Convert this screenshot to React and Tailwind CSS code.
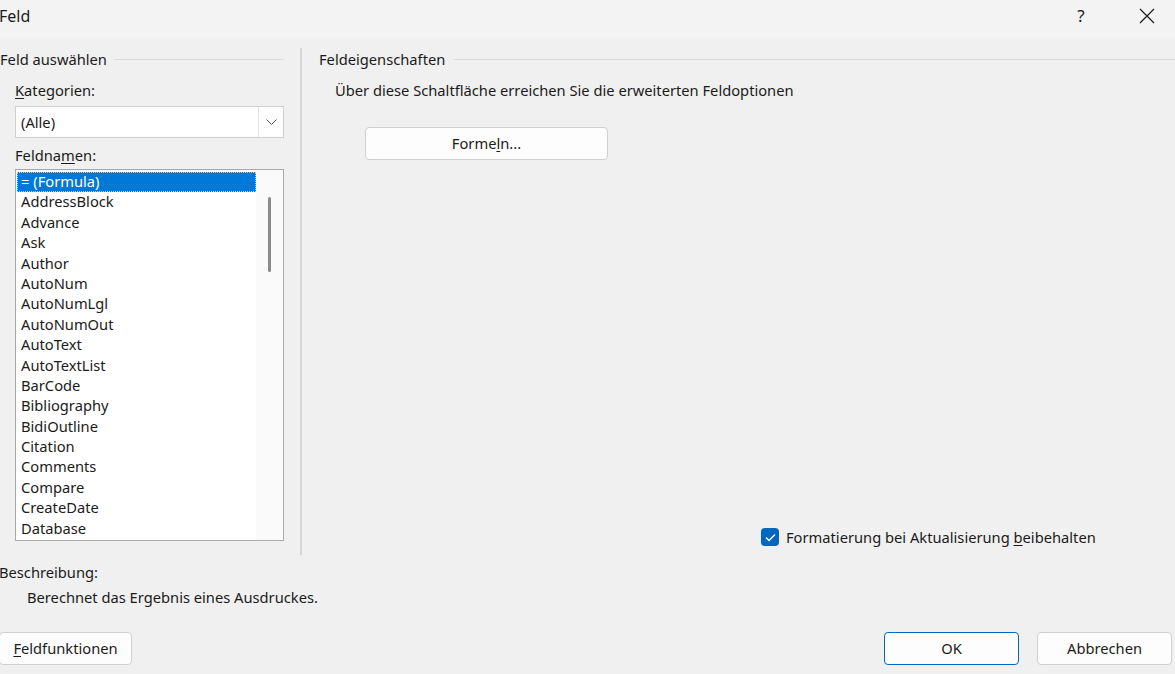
import { useState } from "react";

const FELDER = [
  "= (Formula)", "AddressBlock", "Advance", "Ask", "Author", "AutoNum", "AutoNumLgl",
  "AutoNumOut", "AutoText", "AutoTextList", "BarCode", "Bibliography", "BidiOutline",
  "Citation", "Comments", "Compare", "CreateDate", "Database",
];

const GroupTitle = ({ children }) => (
  <div className="flex items-center h-5">
    <span className="whitespace-nowrap">{children}</span>
    <div className="flex-1 h-px bg-[#dcdcdc] ml-[7px]" />
  </div>
);

const Button = ({ children, primary, className }) => (
  <button
    className={
      "h-[33px] bg-[#fdfdfd] rounded-[4px] border flex items-center justify-center " +
      (primary ? "border-[#0067c0] " : "border-[#d0d0d0] ") +
      (className || "")
    }
  >
    {children}
  </button>
);

export default function App() {
  const [selected, setSelected] = useState(0);
  const [keep, setKeep] = useState(true);

  return (
    <div
      className="w-[1175px] h-[674px] bg-[#f0f0f0] text-[#1b1b1b] text-[14.7px] flex flex-col overflow-hidden"
      style={{ fontFamily: '"Segoe UI", "Noto Sans", sans-serif' }}
    >
      {/* Titelleiste */}
      <div className="h-[38px] shrink-0 bg-[#f3f3f3] flex items-center justify-between pb-[7px]">
        <span className="text-[16px] -ml-[1px]">Feld</span>
        <div className="flex items-center">
          <span className="text-[17px] w-[20px] text-center mr-[48px]">?</span>
          <svg width="16" height="16" viewBox="0 0 16 16" className="mr-[20px]">
            <path d="M1 1 L15 15 M15 1 L1 15" stroke="#1b1b1b" strokeWidth="1.2" fill="none" />
          </svg>
        </div>
      </div>

      {/* Hauptbereich */}
      <div className="h-[517px] shrink-0 flex">
        {/* Feld auswählen */}
        <div className="w-[284px] shrink-0 flex flex-col pt-[11px]">
          <GroupTitle>Feld auswählen</GroupTitle>
          <div className="pl-[15px] mt-[11px] h-5 leading-5">
            <span className="underline underline-offset-2">K</span>ategorien:
          </div>
          <div className="ml-[15px] mt-[6px] h-[32px] bg-white border border-[#cfcfcf] flex">
            <div className="flex-1 flex items-center pl-[5px]">(Alle)</div>
            <div className="w-[25px] border-l border-[#e3e3e3] flex items-center justify-center">
              <svg width="11" height="7" viewBox="0 0 11 7">
                <path d="M0.5 0.5 L5.5 5.5 L10.5 0.5" stroke="#5a5a5a" strokeWidth="1" fill="none" />
              </svg>
            </div>
          </div>
          <div className="pl-[15px] mt-[7px] h-5 leading-5">
            Feldna<span className="underline underline-offset-2">m</span>en:
          </div>
          <div className="ml-[15px] mt-[4px] h-[372px] bg-white border border-[#a9a9a9] flex overflow-hidden">
            <div className="w-[240px] pt-[2px] pl-[1px]">
              {FELDER.map((f, i) => (
                <div
                  key={f}
                  onClick={() => setSelected(i)}
                  className={
                    "h-[20.4px] leading-[19px] pl-[4px] whitespace-nowrap " +
                    (i === selected
                      ? "bg-[#0078d7] text-white outline outline-1 outline-dotted outline-[#f0c090] -outline-offset-1"
                      : "")
                  }
                >
                  {f}
                </div>
              ))}
            </div>
            <div className="flex-1 bg-[#fafafa] flex justify-center pt-[27px]">
              <div className="w-[3px] h-[75px] rounded-full bg-[#8a8a8a]" />
            </div>
          </div>
        </div>

        {/* Trenner */}
        <div className="w-[2px] bg-[#d6d6d6] ml-[16px] mt-[10px]" />

        {/* Feldeigenschaften */}
        <div className="flex-1 flex flex-col pt-[11px] pl-[17px] pb-[8px]">
          <GroupTitle>
            <span className="mr-[2px]">Feldeigenschaften</span>
          </GroupTitle>
          <div className="pl-[16px] mt-[11px] h-5 leading-5">
            Über diese Schaltfläche erreichen Sie die erweiterten Feldoptionen
          </div>
          <div className="pl-[46px] mt-[27px]">
            <Button className="w-[243px] h-[33px]">
              Forme<span className="underline underline-offset-2">l</span>n...
            </Button>
          </div>
          <div className="mt-auto flex items-center pl-[442px] h-5">
            <button
              onClick={() => setKeep(!keep)}
              className={
                "w-[18px] h-[18px] rounded-[4px] flex items-center justify-center " +
                (keep ? "bg-[#0067c0]" : "bg-white border border-[#8a8a8a]")
              }
            >
              {keep && (
                <svg width="11" height="9" viewBox="0 0 11 9">
                  <path d="M1 4.5 L4 7.5 L10 1.5" stroke="white" strokeWidth="1.4" fill="none" />
                </svg>
              )}
            </button>
            <span className="ml-[7px] whitespace-nowrap">
              Formatierung bei Aktualisierung <span className="underline underline-offset-2">b</span>eibehalten
            </span>
          </div>
        </div>
      </div>

      {/* Beschreibung */}
      <div className="mt-[7px] h-5 leading-5 -ml-[1px]">Beschreibung:</div>
      <div className="mt-[5px] h-5 leading-5 pl-[27px]">Berechnet das Ergebnis eines Ausdruckes.</div>

      {/* Schaltflächen */}
      <div className="mt-[25px] flex items-center">
        <Button className="w-[133px] -ml-[1px]">
          <span className="underline underline-offset-2">F</span>eldfunktionen
        </Button>
        <div className="flex-1" />
        <Button primary className="w-[135px]">OK</Button>
        <Button className="w-[135px] ml-[18px] mr-[3px]">Abbrechen</Button>
      </div>
    </div>
  );
}
